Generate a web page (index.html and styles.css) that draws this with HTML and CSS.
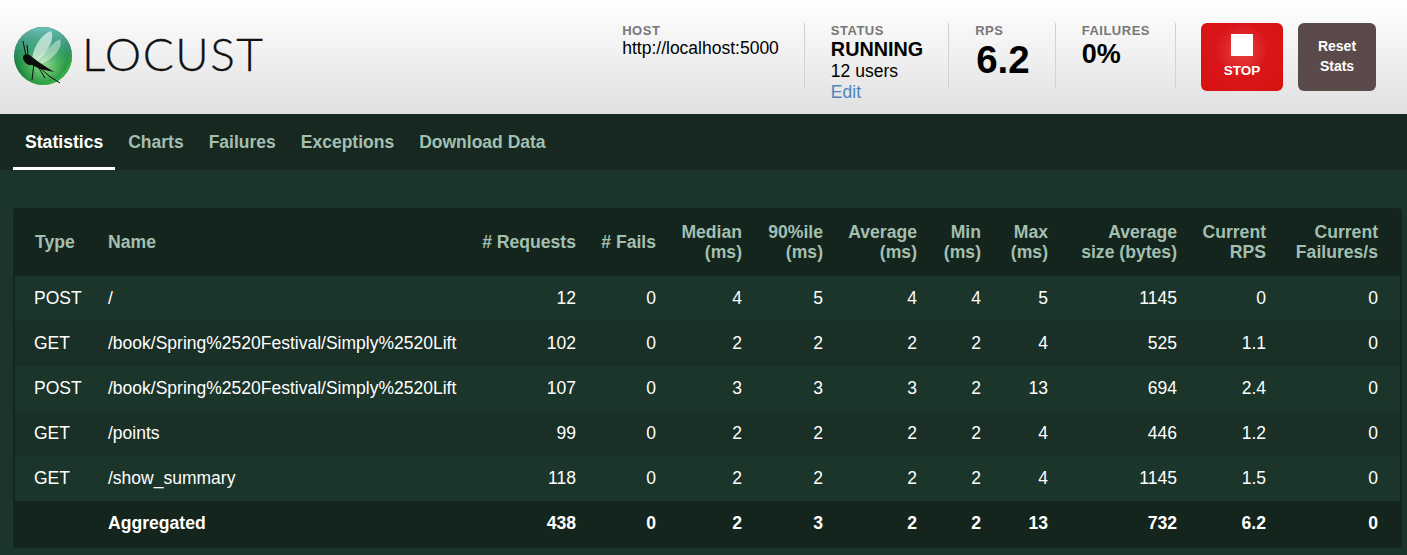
FILE: index.html
```html
<!DOCTYPE html>
<html lang="en">
<head>
    <meta charset="UTF-8">
    <title>Locust</title>
    <link rel="stylesheet" href="styles.css">
</head>
<body>
<div class="top">
    <div class="logo">
        <svg class="logo-mark" width="60" height="60" viewBox="0 0 60 60">
            <defs>
                <radialGradient id="ball" cx="52%" cy="60%" r="55%">
                    <stop offset="0" stop-color="#b4e8a8"/>
                    <stop offset="0.4" stop-color="#58bd62"/>
                    <stop offset="0.78" stop-color="#1f8c3e"/>
                    <stop offset="1" stop-color="#12602f"/>
                </radialGradient>
                <linearGradient id="shine" x1="0" y1="0" x2="0" y2="1">
                    <stop offset="0" stop-color="#6fc0bc"/>
                    <stop offset="0.4" stop-color="#3f9f86" stop-opacity="0.65"/>
                    <stop offset="0.75" stop-color="#2a9a45" stop-opacity="0"/>
                </linearGradient>
                <linearGradient id="rim" x1="0.2" y1="0.2" x2="0.85" y2="0.9">
                    <stop offset="0.6" stop-color="#2fae42" stop-opacity="0"/>
                    <stop offset="1" stop-color="#36b344"/>
                </linearGradient>
                <filter id="soft"><feGaussianBlur stdDeviation="0.7"/></filter>
            </defs>
            <circle cx="30" cy="30" r="29" fill="url(#ball)"/>
            <circle cx="30" cy="30" r="29" fill="url(#shine)"/>
            <circle cx="30" cy="30" r="27.5" fill="none" stroke="url(#rim)" stroke-width="3"/>
            <g filter="url(#soft)">
                <path d="M19 34C20 20 30 7 38 5C42 12 36 25 23 36Z" fill="#fff" fill-opacity="0.6"/>
                <path d="M23 36C31 26 41 16 47 13C50 20 43 32 28 38Z" fill="#fff" fill-opacity="0.42"/>
            </g>
            <path d="M10 31C11 27 16 28 19 31L27 37L41 46L27 43L19 39C15 40 10 36 10 31Z" fill="#0c0c0c"/>
            <g fill="none" stroke="#0c0c0c" stroke-width="1">
                <path d="M13 30L10 15"/>
                <path d="M15 30L14 19"/>
                <path d="M21 37L19 54"/>
                <path d="M26 41L36 50L47 57"/>
                <path d="M24 39L32 52"/>
            </g>
        </svg>
        <span class="logo-text">LOCUST</span>
    </div>
    <div class="stats">
        <div class="stat">
            <div class="label">HOST</div>
            <div class="value">http://localhost:5000</div>
        </div>
        <div class="stat">
            <div class="label">STATUS</div>
            <div class="status">RUNNING</div>
            <div class="value">12 users</div>
            <a class="edit" href="#">Edit</a>
        </div>
        <div class="stat">
            <div class="label">RPS</div>
            <div class="big">6.2</div>
        </div>
        <div class="stat">
            <div class="label">FAILURES</div>
            <div class="pct">0%</div>
        </div>
        <div class="btns">
            <a class="btn stop" href="#"><span class="stop-box"></span>STOP</a>
            <a class="btn reset" href="#">Reset<br>Stats</a>
        </div>
    </div>
</div>

<ul class="tabs">
    <li class="current"><a href="#">Statistics</a></li>
    <li><a href="#">Charts</a></li>
    <li><a href="#">Failures</a></li>
    <li><a href="#">Exceptions</a></li>
    <li><a href="#">Download Data</a></li>
</ul>

<div class="main">
    <table class="tbl">
        <colgroup>
            <col class="c-type"><col class="c-name"><col class="c-req"><col class="c-fails">
            <col class="c-med"><col class="c-90"><col class="c-avg"><col class="c-min">
            <col class="c-max"><col class="c-size"><col class="c-rps"><col class="c-cur">
        </colgroup>
        <thead>
        <tr>
            <th class="l">Type</th><th class="l">Name</th>
            <th># Requests</th><th># Fails</th><th>Median<br>(ms)</th><th>90%ile<br>(ms)</th>
            <th>Average<br>(ms)</th><th>Min<br>(ms)</th><th>Max<br>(ms)</th>
            <th>Average<br>size (bytes)</th><th>Current<br>RPS</th><th>Current<br>Failures/s</th>
        </tr>
        </thead>
        <tbody>
        <tr><td class="l">POST</td><td class="l">/</td><td>12</td><td>0</td><td>4</td><td>5</td><td>4</td><td>4</td><td>5</td><td>1145</td><td>0</td><td>0</td></tr>
        <tr><td class="l">GET</td><td class="l">/book/Spring%2520Festival/Simply%2520Lift</td><td>102</td><td>0</td><td>2</td><td>2</td><td>2</td><td>2</td><td>4</td><td>525</td><td>1.1</td><td>0</td></tr>
        <tr><td class="l">POST</td><td class="l">/book/Spring%2520Festival/Simply%2520Lift</td><td>107</td><td>0</td><td>3</td><td>3</td><td>3</td><td>2</td><td>13</td><td>694</td><td>2.4</td><td>0</td></tr>
        <tr><td class="l">GET</td><td class="l">/points</td><td>99</td><td>0</td><td>2</td><td>2</td><td>2</td><td>2</td><td>4</td><td>446</td><td>1.2</td><td>0</td></tr>
        <tr><td class="l">GET</td><td class="l">/show_summary</td><td>118</td><td>0</td><td>2</td><td>2</td><td>2</td><td>2</td><td>4</td><td>1145</td><td>1.5</td><td>0</td></tr>
        </tbody>
        <tfoot>
        <tr><td class="l"></td><td class="l">Aggregated</td><td>438</td><td>0</td><td>2</td><td>3</td><td>2</td><td>2</td><td>13</td><td>732</td><td>6.2</td><td>0</td></tr>
        </tfoot>
    </table>
</div>
</body>
</html>
```

FILE: styles.css
```css
body, ul, li {
    margin: 0;
    padding: 0;
    list-style: none;
}

body {
    background: #1b352b;
    font-family: "Liberation Sans", Arial, sans-serif;
    font-size: 17.5px;
    color: #fff;
    overflow: hidden;
}

a {
    text-decoration: none;
}

/* header */
.top {
    height: 114px;
    display: flex;
    justify-content: space-between;
    background: linear-gradient(#fff, #e0e0e0);
    color: #000;
}

.logo {
    display: flex;
    align-items: center;
    padding-left: 13px;
    padding-bottom: 2px;
}

.logo-text {
    margin: -5px 0 0 9px;
    font-family: "Lato", sans-serif;
    font-weight: 300;
    font-size: 46px;
    letter-spacing: 1.5px;
    color: #111;
    -webkit-text-stroke: 0.3px #111;
}

.stats {
    display: flex;
    padding: 23px 31px 0 0;
}

.stat {
    height: 65px;
    padding: 0 25px 0 26px;
    border-right: 1px solid #d2d2d2;
    white-space: nowrap;
}

.label {
    font-size: 13px;
    font-weight: bold;
    letter-spacing: 0.5px;
    line-height: 15px;
    color: #777;
}

.value {
    line-height: 20px;
}

.status {
    font-size: 19.8px;
    font-weight: bold;
    line-height: 23px;
}

.edit {
    display: block;
    line-height: 22px;
    color: #4d84bd;
}

.big {
    margin-left: 1px;
    font-size: 38.5px;
    font-weight: bold;
    line-height: 44px;
}

.pct {
    font-size: 27px;
    font-weight: bold;
    line-height: 32px;
}

.btns {
    display: flex;
    gap: 15px;
    margin-left: 25px;
}

.btn {
    display: block;
    height: 68px;
    border-radius: 6px;
    color: #fff;
    font-size: 14px;
    font-weight: bold;
    text-align: center;
    box-sizing: border-box;
}

.stop {
    width: 82px;
    padding-top: 11px;
    font-size: 13.5px;
    background: radial-gradient(circle at 50% 40%, #e84444 0, #d9161a 45%, #d8110f 100%);
}

.stop-box {
    display: block;
    width: 22px;
    height: 22px;
    margin: 0 auto 7px;
    background: #fff;
}

.reset {
    width: 78px;
    padding-top: 13px;
    line-height: 20px;
    background: #5a4a4a;
}

/* tabs */
.tabs {
    display: flex;
    height: 56px;
    padding-left: 13px;
    background: #172820;
    box-sizing: border-box;
}

.tabs li {
    margin-right: 1px;
}

.tabs a {
    display: block;
    box-sizing: border-box;
    height: 56px;
    padding: 0 12px;
    line-height: 56px;
    font-weight: bold;
    color: #a3bfb0;
}

.tabs .current a {
    font-size: 17.6px;
    color: #fff;
    border-bottom: 3px solid #fff;
}

/* table */
.main {
    padding: 38px 7px 0 13px;
}

.tbl {
    width: 100%;
    table-layout: fixed;
    border-collapse: separate;
    border-spacing: 0;
    border: 2px solid #14251d;
    border-radius: 4px;
}

.tbl th, .tbl td {
    padding: 0 14px 0 0;
    text-align: right;
    white-space: nowrap;
}

.tbl th {
    height: 66px;
    padding-bottom: 2px;
    box-sizing: border-box;
    font-size: 17.6px;
    line-height: 20px;
    color: #a3bfb0;
    background: #14251d;
}

.tbl td {
    height: 45px;
}

.tbl .l {
    text-align: left;
    padding-right: 0;
}

.tbl tbody tr:nth-child(even) td {
    background: #1a3027;
}

.tbl tfoot td {
    font-size: 17.6px;
    font-weight: bold;
    background: #14251d;
}

.c-type { width: 93px; }
.c-name { width: 373px; }
.c-req { width: 109px; }
.c-fails { width: 80px; }
.c-med { width: 86px; }
.c-90 { width: 81px; }
.c-avg { width: 94px; }
.c-min { width: 64px; }
.c-max { width: 67px; }
.c-size { width: 129px; }
.c-rps { width: 89px; }
.c-cur { width: 120px; }

.tbl th:first-child {
    padding-left: 20px;
}

.tbl td:first-child {
    padding-left: 19px;
}

.tbl th:last-child, .tbl td:last-child {
    padding-right: 22px;
}
```
